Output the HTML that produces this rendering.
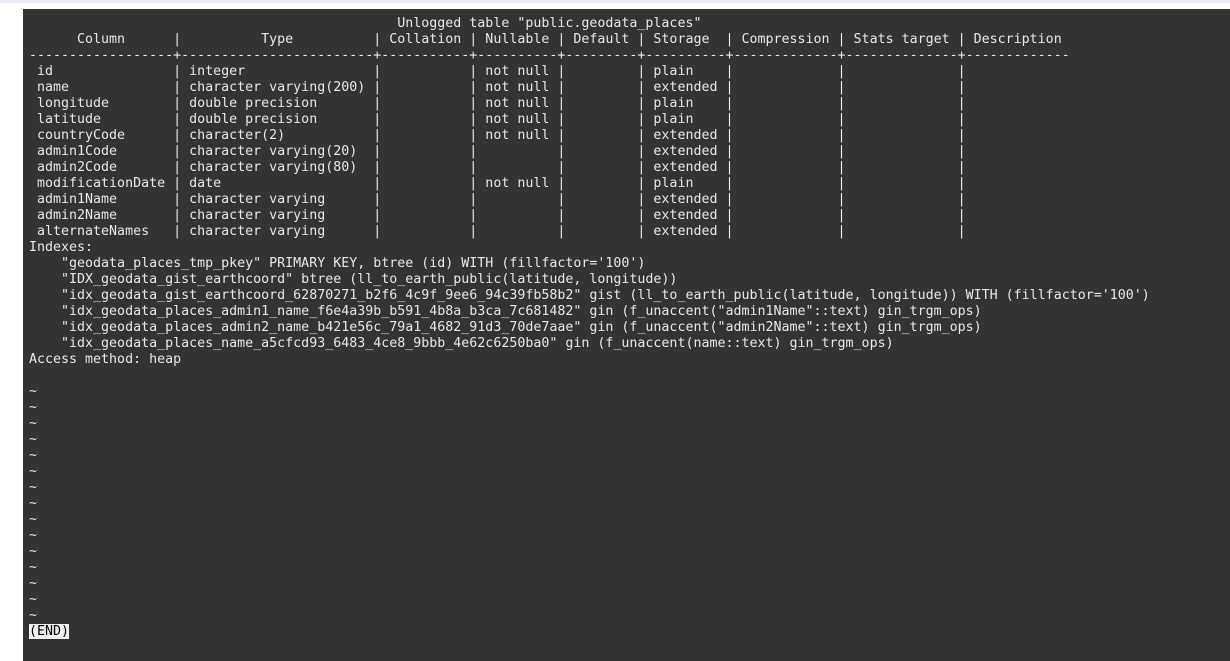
<!DOCTYPE html>
<html><head><meta charset="utf-8"><style>
html,body{margin:0;padding:0;width:1230px;height:661px;overflow:hidden;background:#fff}
.top{position:absolute;left:0;top:0;width:1230px;height:3px;background:#e6ebf1}
.term{position:absolute;left:23px;top:9px;width:1207px;height:652px;background:#333333}
pre{position:absolute;left:29px;top:16px;margin:0;font-family:"DejaVu Sans Mono","Liberation Mono",monospace;font-size:13.3px;line-height:16px;color:#e8e8e8}
.end{background:#f0f0f0;color:#000}
</style></head><body>
<div class="top"></div><div class="term"></div>
<pre>                                              Unlogged table "public.geodata_places"
      Column      |          Type          | Collation | Nullable | Default | Storage  | Compression | Stats target | Description
------------------+------------------------+-----------+----------+---------+----------+-------------+--------------+-------------
 id               | integer                |           | not null |         | plain    |             |              |
 name             | character varying(200) |           | not null |         | extended |             |              |
 longitude        | double precision       |           | not null |         | plain    |             |              |
 latitude         | double precision       |           | not null |         | plain    |             |              |
 countryCode      | character(2)           |           | not null |         | extended |             |              |
 admin1Code       | character varying(20)  |           |          |         | extended |             |              |
 admin2Code       | character varying(80)  |           |          |         | extended |             |              |
 modificationDate | date                   |           | not null |         | plain    |             |              |
 admin1Name       | character varying      |           |          |         | extended |             |              |
 admin2Name       | character varying      |           |          |         | extended |             |              |
 alternateNames   | character varying      |           |          |         | extended |             |              |
Indexes:
    "geodata_places_tmp_pkey" PRIMARY KEY, btree (id) WITH (fillfactor='100')
    "IDX_geodata_gist_earthcoord" btree (ll_to_earth_public(latitude, longitude))
    "idx_geodata_gist_earthcoord_62870271_b2f6_4c9f_9ee6_94c39fb58b2" gist (ll_to_earth_public(latitude, longitude)) WITH (fillfactor='100')
    "idx_geodata_places_admin1_name_f6e4a39b_b591_4b8a_b3ca_7c681482" gin (f_unaccent("admin1Name"::text) gin_trgm_ops)
    "idx_geodata_places_admin2_name_b421e56c_79a1_4682_91d3_70de7aae" gin (f_unaccent("admin2Name"::text) gin_trgm_ops)
    "idx_geodata_places_name_a5cfcd93_6483_4ce8_9bbb_4e62c6250ba0" gin (f_unaccent(name::text) gin_trgm_ops)
Access method: heap

~
~
~
~
~
~
~
~
~
~
~
~
~
~
~
<span class="end">(END)</span></pre>
</body></html>
